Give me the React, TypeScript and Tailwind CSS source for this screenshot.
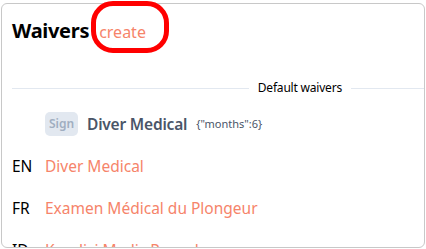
export default function App() {
  const rows = [
    { lang: "EN", title: "Diver Medical" },
    { lang: "FR", title: "Examen Médical du Plongeur" },
    { lang: "ID", title: "Kondisi Medis Penyelam" },
  ];

  return (
    <div className="relative h-[249px] w-[426px] bg-white p-[1px] pt-[3px] font-['Noto_Sans','Open_Sans',sans-serif] text-black">
      <div className="h-[245px] overflow-hidden rounded-[6px] border border-[#c8c8c8]">
        {/* header */}
        <div className="flex items-baseline gap-[10px] pl-[10px] pt-[13px]">
          <h1 className="text-[20px] font-bold leading-[28px] tracking-[-0.3px]">Waivers</h1>
          <a className="text-[16px] leading-[28px] text-[#f6846a]">create</a>
        </div>

        {/* divider */}
        <div className="mt-[34px] flex items-center pl-[10px]">
          <div className="h-px flex-1 bg-[#e2e8f0]" />
          <span className="px-[9px] text-[12px] leading-[16px] tracking-[-0.2px]">Default waivers</span>
          <div className="h-px w-[73px] bg-[#e2e8f0]" />
        </div>

        {/* default waiver */}
        <div className="mt-[16px] flex items-center pl-[43px]">
          <span className="flex h-[24px] w-[33px] items-center justify-center rounded-[5px] bg-[#e2e8f0] text-[12px] font-semibold text-[#a0aec0]">
            Sign
          </span>
          <span className="ml-[9px] text-[15.5px] font-semibold leading-[24px] tracking-[-0.2px] text-[#4a5568]">Diver Medical</span>
          <span className="ml-[9px] text-[11px] leading-[24px] text-[#4a5568]">{'{"months":6}'}</span>
        </div>

        {/* translations */}
        <div className="mt-[18px] flex flex-col gap-[18px] pl-[10px]">
          {rows.map((r) => (
            <div key={r.lang} className="flex items-center text-[15.5px] leading-[24px]">
              <span className="w-[33px]">{r.lang}</span>
              <span className="text-[#f6846a]">{r.title}</span>
            </div>
          ))}
        </div>
      </div>

      {/* red annotation around "create" */}
      <div className="absolute left-[91px] top-[1px] h-[52px] w-[78px] rounded-[22px] border-[5px] border-[#ff0000]" />
    </div>
  );
}
